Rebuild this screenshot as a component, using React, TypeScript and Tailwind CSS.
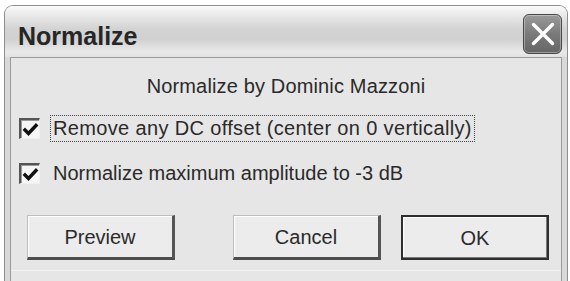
import React from "react";

function CheckBox() {
  return (
    <div className="w-[21px] h-[21px] shrink-0 bg-[#f6f6f6] border-t-2 border-l-2 border-b border-r border-t-[#555] border-l-[#555] border-b-[#f0f0f0] border-r-[#f0f0f0] shadow-[inset_1px_1px_0_#9a9a9a] flex items-center justify-center">
      <svg width="17" height="17" viewBox="0 0 17 17">
        <path d="M3 9 L6.5 12.5 L14 4.5" fill="none" stroke="#111" strokeWidth="3.4" strokeLinecap="square" />
      </svg>
    </div>
  );
}

function Btn({ label, isDefault, className }: { label: string; isDefault?: boolean; className?: string }) {
  return (
    <div
      className={
        "w-[148px] h-[45px] flex items-center justify-center text-[20px] leading-none text-[#2a2a2a] bg-[#ececec] " +
        (isDefault
          ? "border-2 border-[#2e2e2e] shadow-[inset_-1px_-1px_0_#7a7a7a,inset_1px_1px_0_#ffffff] "
          : "border-t border-l border-t-[#bdbdbd] border-l-[#bdbdbd] border-b-[3px] border-r-[3px] border-b-[#4e4e4e] border-r-[#555] shadow-[inset_1px_1px_0_#ffffff] ") +
        (className ?? "")
      }
    >
      {label}
    </div>
  );
}

export default function App() {
  return (
    <div
      className="w-[570px] h-[281px] overflow-hidden bg-white pt-[5px] pl-[4px] pr-[2px]"
      style={{ fontFamily: '"Liberation Sans", Arial, sans-serif' }}
    >
      <div className="h-full flex flex-col rounded-t-[9px] border border-b-0 border-[#8e8e8e] bg-[#d9d9d9]">
        {/* Title bar */}
        <div className="h-[51px] shrink-0 flex items-start justify-between rounded-t-[8px] bg-[linear-gradient(to_bottom,#fbfbfb_0%,#eeeeee_12%,#d3d3d3_45%,#d1d1d1_65%,#e9e9e9_90%,#e2e2e2_100%)]">
          <div className="mt-[18px] ml-[13px] text-[25px] leading-none font-bold text-[#262626]">Normalize</div>
          <div className="mt-[8px] mr-[5px] w-[39px] h-[40px] rounded-[6px] border border-[#474747] bg-[linear-gradient(to_bottom,#9a9a9a_0%,#7a7a7a_50%,#666666_100%)] shadow-[inset_0_0_0_1px_rgba(255,255,255,0.35)] flex items-center justify-center">
            <svg width="24" height="24" viewBox="0 0 24 24">
              <path d="M2.5 2.5 L21.5 21.5 M21.5 2.5 L2.5 21.5" stroke="#ffffff" strokeWidth="3.4" strokeLinecap="round" />
            </svg>
          </div>
        </div>
        {/* Content */}
        <div className="flex-1 mx-[5px] border border-b-0 border-[#9a9a9a] bg-[#e6e6e6] flex flex-col text-[#2a2a2a]">
          <div className="pt-[18px] text-center text-[20px] leading-none tracking-[0.15px]">Normalize by Dominic Mazzoni</div>
          <div className="mt-[19px] pl-[8px] flex items-center gap-[10px]">
            <CheckBox />
            <span className="border border-dotted border-[#444] px-[2px] pt-[2px] pb-[3px] text-[20px] leading-[20px] tracking-[0.35px]">
              Remove any DC offset (center on 0 vertically)
            </span>
          </div>
          <div className="mt-[18px] pl-[8px] flex items-center gap-[10px]">
            <CheckBox />
            <span className="border border-transparent px-[2px] pt-[2px] pb-[3px] text-[20px] leading-[20px]">
              Normalize maximum amplitude to -3 dB
            </span>
          </div>
          <div className="mt-[28px] pl-[16px] flex">
            <Btn label="Preview" />
            <Btn label="Cancel" className="ml-[58px]" />
            <Btn label="OK" isDefault className="ml-[20px]" />
          </div>
          <div className="mt-[10px] h-px bg-[#f2f2f2]" />
        </div>
      </div>
    </div>
  );
}
